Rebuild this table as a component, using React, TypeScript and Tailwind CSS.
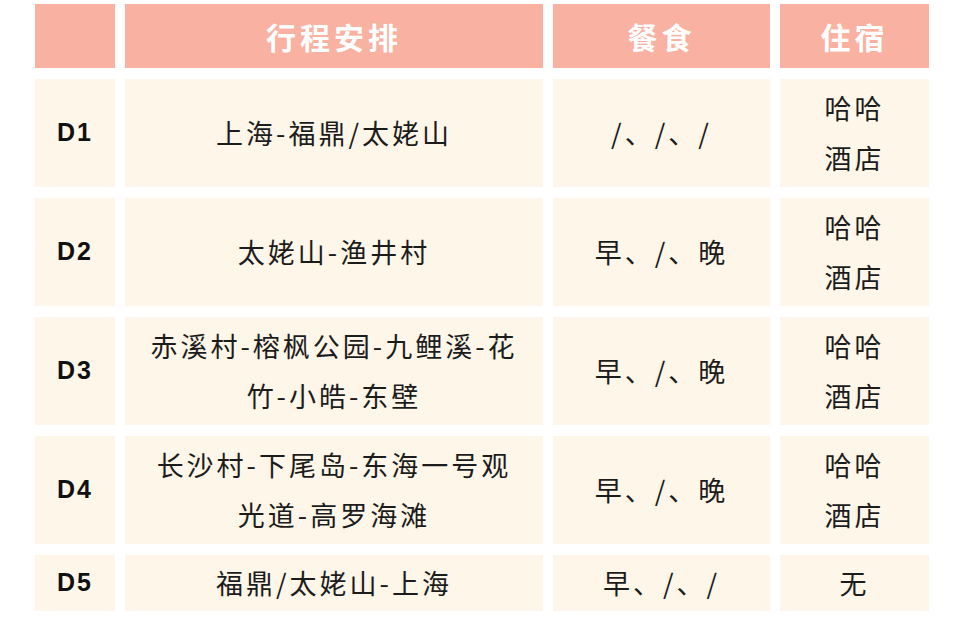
import { Fragment } from "react";

const cjk = { fontFamily: '"Noto Sans CJK SC", "Noto Sans", sans-serif' };

type Row = { day: string; route: string; meals: string; stay: string };

const rows: Row[] = [
  { day: "D1", route: "上海-福鼎/太姥山", meals: "/、/、/", stay: "哈哈酒店" },
  { day: "D2", route: "太姥山-渔井村", meals: "早、/、晚", stay: "哈哈酒店" },
  { day: "D3", route: "赤溪村-榕枫公园-九鲤溪-花竹-小皓-东壁", meals: "早、/、晚", stay: "哈哈酒店" },
  { day: "D4", route: "长沙村-下尾岛-东海一号观光道-高罗海滩", meals: "早、/、晚", stay: "哈哈酒店" },
  { day: "D5", route: "福鼎/太姥山-上海", meals: "早、/、/", stay: "无" },
];

const Head = ({ children }: { children?: React.ReactNode }) => (
  <div
    className="bg-[#f9b1a1] flex items-center justify-center text-white font-bold text-[30px] tracking-[4px] leading-none"
    style={cjk}
  >
    {children}
  </div>
);

const Cell = ({ children, className = "" }: { children: React.ReactNode; className?: string }) => (
  <div
    className={`bg-[#fef6e8] flex items-center justify-center text-center text-[#1c1c1c] text-[27px] tracking-[3px] leading-[50px] ${className}`}
    style={cjk}
  >
    {children}
  </div>
);

export default function App() {
  return (
    <div className="w-[955px] h-[623px] bg-white overflow-hidden pt-[4px] pl-[35px]">
      <div className="grid grid-cols-[80px_418px_217px_149px] grid-rows-[64px_108px_108px_108px_108px_56px] gap-x-[10px] gap-y-[11px]">
        <Head />
        <Head>行程安排</Head>
        <Head>餐食</Head>
        <Head>住宿</Head>
        {rows.map((r) => (
          <Fragment key={r.day}>
            <div
              className="bg-[#fef6e8] flex items-center justify-center text-[#111] font-bold text-[25px] tracking-[2px]"
              style={{ fontFamily: '"Liberation Sans", Arial, sans-serif' }}
            >
              {r.day}
            </div>
            <Cell className="px-[24px]">{r.route}</Cell>
            <Cell>{r.meals}</Cell>
            <Cell className="px-[30px]">{r.stay}</Cell>
          </Fragment>
        ))}
      </div>
    </div>
  );
}
